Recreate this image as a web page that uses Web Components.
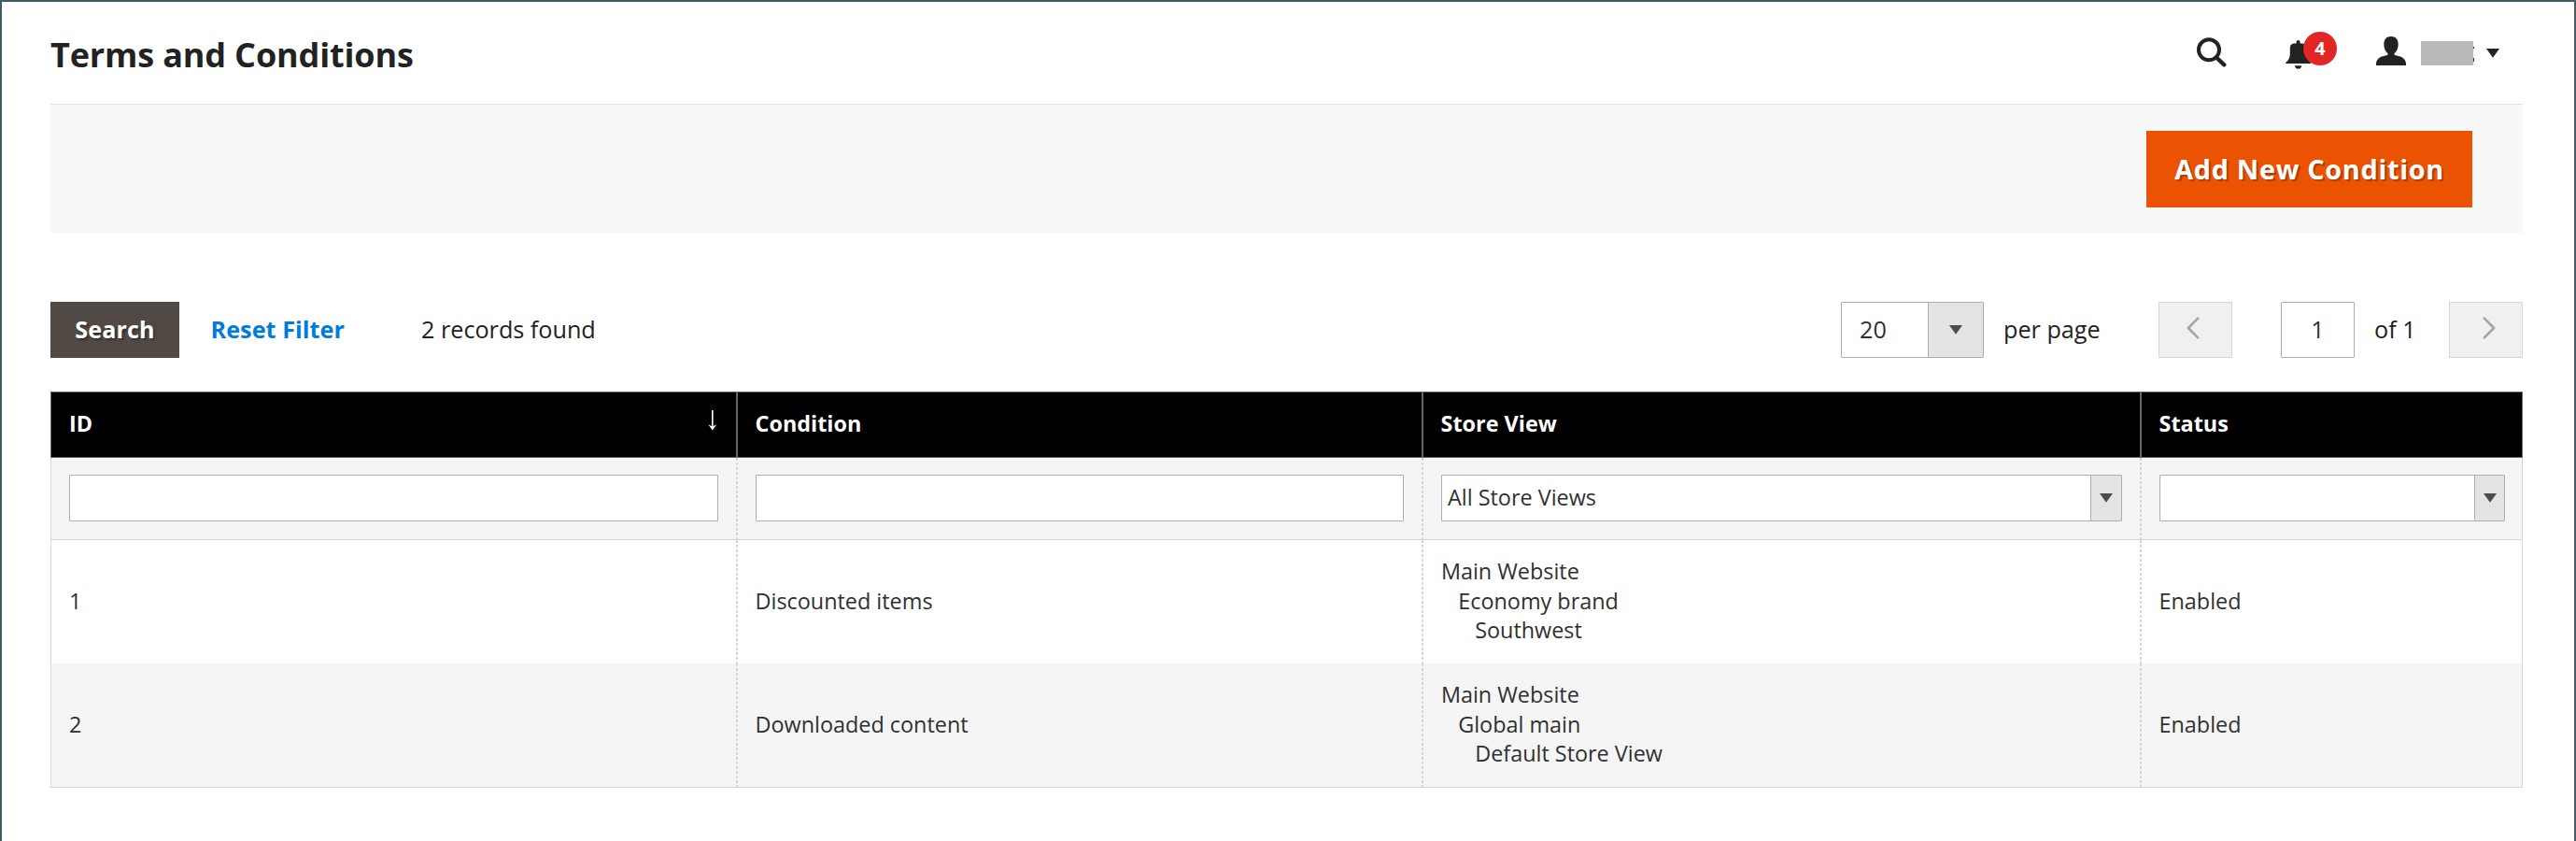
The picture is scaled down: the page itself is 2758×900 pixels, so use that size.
<!DOCTYPE html>
<html lang="en">
<head>
<meta charset="utf-8">
<title>Terms and Conditions</title>
<style>
html, body { margin: 0; height: 100%; }
body { font-family: "Open Sans", sans-serif; color: #303030; background: #fff; overflow: hidden; }
</style>
</head>
<body>
<terms-page></terms-page>

<script>
const define = (name, html) => {
  const tpl = document.createElement('template');
  tpl.innerHTML = html;
  customElements.define(name, class extends HTMLElement {
    constructor() {
      super();
      this.attachShadow({ mode: 'open' }).append(tpl.content.cloneNode(true));
    }
  });
};

/* Icons */
define('icon-search', `<style>:host{display:block;width:32px;height:32px}svg{display:block}</style>
<svg width="32" height="32" viewBox="0 0 32 32" fill="none" stroke="#222" stroke-linecap="round"><circle cx="13" cy="13.3" r="11" stroke-width="4"/><path d="M21.5 22 29.3 29.3" stroke-width="4.4"/></svg>`);
define('icon-bell', `<style>:host{display:block;width:28px;height:33px}svg{display:block}</style>
<svg width="28" height="33" viewBox="0 0 28 33" fill="#222"><path d="M11.6 4.4V4a2 2 0 0 1 4 0v1.4h2.6q4.2.4 4.2 5v6.500q.2 5.600 4.600 9.200v1H.2v-1q4.400-3.600 4.600-9.200V10.400q0-4.600 4.200-5h2.600z"/><path d="M9.900 29.300h7.400q-.5 3.400-3.700 3.400t-3.700-3.400z"/></svg>`);
define('icon-user', `<style>:host{display:block;width:32px;height:33px}svg{display:block}</style>
<svg width="32" height="33" viewBox="0 0 32 33" fill="#222"><path d="M16 2c5 0 7.700 3.400 7.700 8.200 0 4.200-1.500 7.600-4.200 10v1.200q1 .9 3.500 1.300c5.500.8 9 4.200 9 8.800V34H0v-2.500c0-4.600 3.500-8 9-8.800q2.500-.4 3.500-1.300v-1.200C9.800 17.800 8.300 14.400 8.300 10.200 8.300 5.400 11 2 16 2z"/></svg>`);
define('icon-caret', `<style>:host{display:block;width:14px;height:10px;color:#514943}svg{display:block}</style>
<svg width="14" height="10" viewBox="0 0 14 10" fill="currentColor"><path d="M0 0h14L7 9.800z"/></svg>`);
define('icon-chevron', `<style>:host{display:block;width:14px;height:24px}:host([next]){transform:scaleX(-1)}svg{display:block}</style>
<svg width="14" height="24" viewBox="0 0 14 24" fill="none" stroke="#a6a4a2" stroke-width="2.600" stroke-linecap="round" stroke-linejoin="round"><path d="M12.200 1.700 1.900 12 12.200 22.300"/></svg>`);
define('icon-sort', `<style>:host{display:block;width:10px;height:22px}svg{display:block}</style>
<svg width="10" height="22" viewBox="0 0 10 22"><path d="M4.800 0V19" stroke="#fff" stroke-width="1.600"/><path d="M.3 15.300 4.800 17.600 9.300 15.300 4.800 21.500z" fill="#fff"/></svg>`);

/* Controls */
define('text-box', `<style>:host{display:flex;align-items:center;box-sizing:border-box;height:50px;background:#fff;border:1px solid #adadad;border-radius:1px;font-size:25.2px}</style><slot></slot>`);
define('select-box', `<style>
:host{display:flex;box-sizing:border-box;height:50px;background:#fff;border:1px solid #adadad;border-radius:1px;font-size:23.4px;--pad:6.5px;--drop:1px}
.value{flex:1;display:flex;align-items:center;padding-left:var(--pad);padding-bottom:var(--drop)}
.arrow{box-sizing:border-box;width:var(--arrow,33px);border-left:1px solid #adadad;background:#e3e3e3;display:flex;align-items:center;justify-content:center}
</style><div class="value"><slot></slot></div><div class="arrow"><icon-caret></icon-caret></div>`);
define('page-step', `<style>:host{display:flex;box-sizing:border-box;width:79px;height:60px;padding:0 6px 4px 0;align-items:center;justify-content:center;background:#f0f0f0;border:1px solid #d6d6d6}:host([next]){padding:0 0 4px 6px}</style><slot></slot>`);

/* Page header */
define('page-header', `<style>
:host{display:flex;box-sizing:border-box;height:110px;justify-content:space-between;align-items:flex-start;border-bottom:1px solid #e3e3e3}
h1{margin:32px 0 0;font-size:36px;line-height:49px;font-weight:700;letter-spacing:-.15px;color:#222}
.tools{display:flex;align-items:flex-start;margin-right:25px}
icon-search{margin-top:38px}
.bell{position:relative;margin:39px 0 0 63px}
.badge{position:absolute;left:19px;top:-7px;width:36px;height:36px;border-radius:50%;background:#e22626;color:#fff;font-size:19.800px;font-weight:700;line-height:36px;text-align:center}
icon-user{margin:35px 0 0 69px}
.name{width:56px;height:26px;margin:42px 0 0 16px;background:#b9b9b9;position:relative}
.name::before,.name::after{content:"";position:absolute;left:56px;width:1px;background:#333}
.name::before{top:6px;height:2px}
.name::after{top:18px;height:4px}
icon-caret{margin:50px 0 0 14px;color:#222}
</style>
<h1><slot></slot></h1>
<div class="tools"><icon-search></icon-search><div class="bell"><icon-bell></icon-bell><div class="badge">4</div></div><icon-user></icon-user><div class="name"></div><icon-caret></icon-caret></div>`);

define('action-bar', `<style>
:host{display:flex;box-sizing:border-box;height:137px;background:#f8f8f8;justify-content:flex-end;padding:28px 54px 0 0}
button{box-sizing:border-box;width:349px;height:82px;border:0;padding:0 0 2px 0;background:#eb5202;color:#fff;font:700 28.800px "Open Sans",sans-serif;letter-spacing:.72px;text-shadow:2px 2px 0 rgba(0,0,0,.25)}
</style><button><slot></slot></button>`);

define('grid-toolbar', `<style>
:host{display:flex;align-items:center;height:60px;margin-top:74px;font-size:25.200px;color:#222;white-space:nowrap}
button{box-sizing:border-box;width:138px;height:60px;border:0;padding:0 0 2px;background:#514943;color:#fff;font:700 25.200px "Open Sans",sans-serif;text-shadow:2px 2px 2px rgba(0,0,0,.35);letter-spacing:.1px}
a{margin-left:33.500px;font-weight:700;color:#007bdb;padding-bottom:2px;letter-spacing:.05px;width:143px}
.found{margin-left:82.500px}
.found,.label{padding-bottom:2px}
.pager{margin-left:auto;display:flex;align-items:center}
select-box{width:153px;height:60px;font-size:25.200px;--pad:19px;--arrow:59px;--drop:2px;color:#303030}
.per{margin-left:21px;width:166px}
text-box{width:79px;height:60px;justify-content:center;padding-bottom:2px;margin-left:52px;color:#303030}
.of{margin-left:21px;width:80px}
</style>
<button>Search</button><a>Reset Filter</a><span class="found">2 records found</span>
<div class="pager"><select-box>20</select-box><span class="label per">per page</span><page-step><icon-chevron></icon-chevron></page-step><text-box>1</text-box><span class="label of">of 1</span><page-step next><icon-chevron next></icon-chevron></page-step></div>`);

/* Grid: the row sets height, fill and the --rule paint its cells draw on their left edge */
define('grid-row', `<style>
:host{display:grid;box-sizing:border-box;grid-template-columns:734px 734px 769px 410px;height:132px;background:#fff;font-size:23.400px;line-height:32px;box-shadow:inset 1px 0 #d6d6d6,inset -1px 0 #d6d6d6;--rule:repeating-linear-gradient(#d6d6d6 0 3px,transparent 3px 5px);--lift:2px}
:host([kind=head]){height:71px;background:#000;color:#fff;font-weight:700;box-shadow:inset 0 0 0 1px #666;--rule:#666;--lift:3px}
:host([kind=filter]){height:88px;background:#f5f5f5;border-bottom:1px solid #d6d6d6}
:host([kind=last]){background:#f5f5f5;height:133px;border-bottom:1px solid #d6d6d6}
</style><slot></slot>`);
define('grid-cell', `<style>
:host{display:flex;align-items:stretch}
.rule{width:2px;background:var(--rule)}
:host([first]) .rule{background:none}
.body{flex:1;display:flex;align-items:center;justify-content:space-between;padding:0 19px var(--lift) 18.500px}
:host([first]) .body{padding-left:18px}
::slotted(text-box),::slotted(select-box){flex:1}
::slotted(icon-sort){margin-bottom:6px;margin-right:1px}
::slotted(store-tree){margin-top:1px}
</style><div class="rule"></div><div class="body"><slot></slot></div>`);
define('store-tree', `<style>:host{display:block;line-height:31.900px;padding-left:.4px}::slotted(div){display:block}::slotted(div:nth-child(2)){padding-left:18.300px}::slotted(div:nth-child(3)){padding-left:36.300px}</style><slot></slot>`);

define('conditions-grid', `<style>:host{display:block;margin-top:36px}.narrow{--arrow:32px}</style>
<grid-row kind="head"><grid-cell first><span>ID</span><icon-sort></icon-sort></grid-cell><grid-cell>Condition</grid-cell><grid-cell>Store View</grid-cell><grid-cell>Status</grid-cell></grid-row>
<grid-row kind="filter"><grid-cell first><text-box></text-box></grid-cell><grid-cell><text-box></text-box></grid-cell><grid-cell><select-box>All Store Views</select-box></grid-cell><grid-cell><select-box class="narrow"></select-box></grid-cell></grid-row>
<grid-row><grid-cell first>1</grid-cell><grid-cell>Discounted items</grid-cell><grid-cell><store-tree><div>Main Website</div><div>Economy brand</div><div>Southwest</div></store-tree></grid-cell><grid-cell>Enabled</grid-cell></grid-row>
<grid-row kind="last"><grid-cell first>2</grid-cell><grid-cell>Downloaded content</grid-cell><grid-cell><store-tree><div>Main Website</div><div>Global main</div><div>Default Store View</div></store-tree></grid-cell><grid-cell>Enabled</grid-cell></grid-row>`);

define('terms-page', `<style>
:host{display:block;box-sizing:border-box;width:2758px;height:900px;padding:0 55px 0 52px;border:2px solid #465a66;border-bottom:0}
</style>
<page-header>Terms and Conditions</page-header>
<action-bar>Add New Condition</action-bar>
<grid-toolbar></grid-toolbar>
<conditions-grid></conditions-grid>`);
</script>
</body>
</html>
